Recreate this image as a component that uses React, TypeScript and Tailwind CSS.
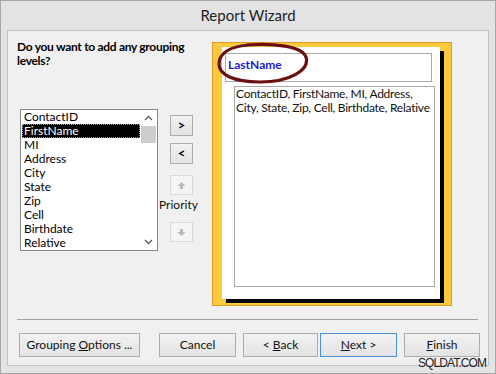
import React from 'react';

const fields = ['ContactID', 'FirstName', 'MI', 'Address', 'City', 'State', 'Zip', 'Cell', 'Birthdate', 'Relative'];

const Chevron = ({ up }: { up?: boolean }) => (
  <svg width="9" height="6" viewBox="0 0 9 6">
    <polyline
      points={up ? '1,5 4.5,1.5 8,5' : '1,1 4.5,4.5 8,1'}
      fill="none"
      stroke="#606060"
      strokeWidth="1.4"
    />
  </svg>
);

const PriorityArrow = ({ up }: { up?: boolean }) => (
  <svg width="9" height="9" viewBox="0 0 9 9">
    <path
      d={up ? 'M4.5 1 L8.5 5 L6 5 L6 8 L3 8 L3 5 L0.5 5 Z' : 'M4.5 8 L8.5 4 L6 4 L6 1 L3 1 L3 4 L0.5 4 Z'}
      fill="#b8b8b8"
    />
  </svg>
);

const WinButton = ({
  className,
  children,
  primary,
}: {
  className: string;
  children: React.ReactNode;
  primary?: boolean;
}) => (
  <div
    className={`h-[24px] flex items-center justify-center border bg-gradient-to-b from-[#f2f2f2] to-[#e3e3e3] text-[12px] text-[#111] ${
      primary ? 'border-[#4a92d8]' : 'border-[#acacac]'
    } ${className}`}
  >
    {children}
  </div>
);

export default function App() {
  return (
    <div className="relative w-[496px] h-[374px] bg-[#e3e3e3] border border-[#a6a6a6] flex flex-col font-['Lato','Liberation_Sans',sans-serif] text-[12px] text-black">
      {/* title bar */}
      <div className="h-[29px] flex items-center justify-center text-[15px] text-[#222]">Report Wizard</div>

      {/* client area */}
      <div className="mx-[6px] h-[336px] border border-[#c2c2c2] bg-[#f0f0f0] flex flex-col">
        <div className="flex pl-[9px]">
          <div className="w-[195px] pt-[9px]">
            <div className="font-bold leading-[14px] tracking-[-0.3px] whitespace-nowrap">
              Do you want to add any grouping
              <br />
              levels?
            </div>

            <div className="flex mt-[41px]">
              {/* field list */}
              <div className="ml-[3px] w-[138px] h-[142px] border border-[#828790] bg-white flex">
                <div className="flex-1 pl-px">
                  {fields.map((f) => (
                    <div
                      key={f}
                      className={`h-[14px] leading-[14px] pl-[2px] ${
                        f === 'FirstName'
                          ? 'bg-black text-white outline-1 outline-dotted outline-[#9a9a9a] -outline-offset-1'
                          : ''
                      }`}
                    >
                      {f}
                    </div>
                  ))}
                </div>
                <div className="w-[17px] flex flex-col items-center">
                  <div className="h-[16px] flex items-center justify-center">
                    <Chevron up />
                  </div>
                  <div className="w-[15px] h-[17px] bg-[#cdcdcd]" />
                  <div className="flex-1" />
                  <div className="h-[16px] flex items-center justify-center">
                    <Chevron />
                  </div>
                </div>
              </div>

              {/* add / remove / priority */}
              <div className="ml-px w-[34px] flex flex-col items-end pt-[6px]">
                <div className="w-[23px] h-[21px] border border-[#acacac] bg-gradient-to-b from-[#f2f2f2] to-[#e3e3e3] flex items-center justify-center font-bold text-[13px] leading-none">
                  &gt;
                </div>
                <div className="mt-[7px] w-[23px] h-[21px] border border-[#acacac] bg-gradient-to-b from-[#f2f2f2] to-[#e3e3e3] flex items-center justify-center font-bold text-[13px] leading-none">
                  &lt;
                </div>
                <div className="mt-[11px] w-[23px] h-[20px] border border-[#d9d9d9] bg-[#f4f4f4] flex items-center justify-center">
                  <PriorityArrow up />
                </div>
                <div className="mt-[3px] w-[34px] leading-[14px] text-[#111]">Priority</div>
                <div className="mt-[10px] w-[23px] h-[20px] border border-[#d9d9d9] bg-[#f4f4f4] flex items-center justify-center">
                  <PriorityArrow />
                </div>
              </div>
            </div>
          </div>

          {/* report preview */}
          <div className="mt-[11px] w-[240px] h-[264px] border border-[#e2992c] bg-[#fdca3c] pl-[9px] pt-[4px]">
            <div className="relative w-[218px] h-[252px] bg-white shadow-[4px_4px_0_#000] pt-[6px]">
              <div className="ml-[3px] w-[207px] h-[29px] border border-[#a8a8a8] pl-[2px] pt-[3px] text-[12px] leading-[16px] font-bold text-[#1a1ad6]">
                LastName
              </div>
              <div className="ml-[12px] mt-[4px] w-[201px] h-[201px] border border-[#a8a8a8] pl-px text-[#111] whitespace-nowrap tracking-[-0.25px] leading-[14px]">
                ContactID, FirstName, MI, Address,
                <br />
                City, State, Zip, Cell, Birthdate, Relative
              </div>
              <svg className="absolute left-[-6px] top-[-5px]" width="96" height="44" viewBox="0 0 96 44">
                <path
                  d="M30 3 C 58 1, 86 4, 90 15 C 94 28, 74 40, 44 40 C 16 40, 3 32, 3 22 C 3 11, 14 4, 34 3"
                  fill="none"
                  stroke="#6a1010"
                  strokeWidth="3.2"
                />
              </svg>
            </div>
          </div>
        </div>

        <div className="mt-[13px] ml-[9px] w-[461px] h-px bg-[#a0a0a0]" />

        <div className="mt-[13px] ml-[11px] flex">
          <WinButton className="w-[121px]">
            Grouping&nbsp;<span className="underline">O</span>ptions ...
          </WinButton>
          <WinButton className="ml-[19px] w-[77px]">Cancel</WinButton>
          <WinButton className="ml-[7px] w-[75px]">
            &lt; <span className="underline ml-[3px]">B</span>ack
          </WinButton>
          <WinButton className="ml-[2px] w-[77px]" primary>
            <span className="underline">N</span>ext &gt;
          </WinButton>
          <WinButton className="ml-[7px] w-[76px]">
            <span className="underline">F</span>inish
          </WinButton>
        </div>
      </div>

      <div className="absolute left-[417px] top-[355px] font-['Liberation_Sans',sans-serif] text-[12px] leading-[14px] tracking-[-0.9px] text-[#222]">
        SQLDAT.COM
      </div>
    </div>
  );
}
